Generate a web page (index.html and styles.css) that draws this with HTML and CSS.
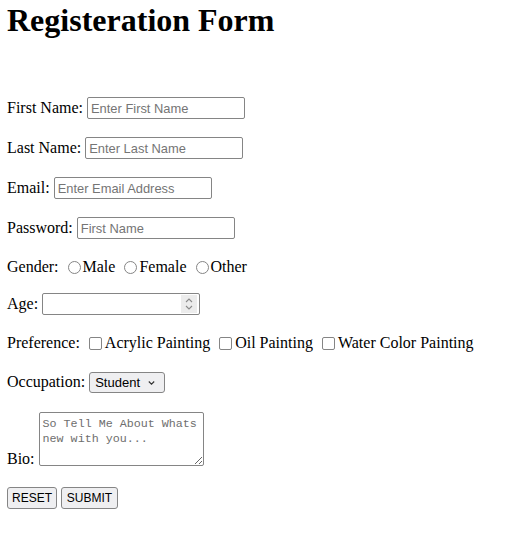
FILE: index.html
```html
<!DOCTYPE html>
<html>
<head>
<meta charset="utf-8">
<title>Registeration Form</title>
<link rel="stylesheet" href="styles.css">
</head>
<body>
<h1 class="title">Registeration Form</h1>
<form class="form">
  <div class="row r1">First Name: <input class="text" type="text" placeholder="Enter First Name"></div>
  <div class="row r1">Last Name: <input class="text" type="text" placeholder="Enter Last Name"></div>
  <div class="row r1">Email: <input class="text" type="email" placeholder="Enter Email Address"></div>
  <div class="row r-pass">Password: <input class="text" type="password" placeholder="First Name"></div>
  <div class="row r-gender">Gender: <input class="radio" type="radio" name="g">Male <input class="radio" type="radio" name="g">Female <input class="radio" type="radio" name="g">Other</div>
  <div class="row r-age">Age: <span class="num-wrap"><input class="text num" type="text"><span class="spin"><svg width="10" height="16" viewBox="0 0 10 16"><path d="M2 6 L5 3 L8 6" fill="none" stroke="#8a8a8a" stroke-width="1.1"/><path d="M2 10 L5 13 L8 10" fill="none" stroke="#8a8a8a" stroke-width="1.1"/></svg></span></span></div>
  <div class="row r-pref">Preference: <input class="check" type="checkbox">Acrylic Painting <input class="check" type="checkbox">Oil Painting <input class="check" type="checkbox">Water Color Painting</div>
  <div class="row r-occ">Occupation: <span class="sel-wrap"><select class="sel"><option>Student</option></select><svg class="chev" width="9" height="6" viewBox="0 0 9 6"><path d="M1.8 1.5 L4.5 4.2 L7.2 1.5" fill="none" stroke="#333" stroke-width="1.1"/></svg></span></div>
  <div class="bio-row"><span class="bio-label">Bio:</span><textarea class="bio" placeholder="So Tell Me About Whats new with you..."></textarea></div>
  <div class="buttons"><button class="btn b-reset" type="reset">RESET</button><button class="btn b-submit" type="submit">SUBMIT</button></div>
</form>
</body>
</html>
```
FILE: styles.css
```css
html, body {
  background: #ffffff;
}
body {
  margin: 0;
  padding: 2px 8px 0 7px;
  font-family: "Liberation Serif", "Times New Roman", serif;
  font-size: 16px;
  color: #000;
}
.title {
  margin: 0 0 58px 0;
  font-size: 32px;
  font-weight: bold;
  line-height: 37px;
}
.row {
  height: 22px;
  line-height: 22px;
  white-space: nowrap;
}
.r1 { margin-bottom: 18px; }
.r-pass { margin-bottom: 17px; }
.r-gender { margin-bottom: 15px; }
.r-age { margin-bottom: 17px; }
.r-pref { margin-bottom: 17px; }
.r-occ { margin-bottom: 19px; }
.text {
  box-sizing: border-box;
  width: 158px;
  height: 22px;
  padding: 1px 3px;
  border: 1px solid #858585;
  border-radius: 2px;
  font-family: "Liberation Sans", Arial, sans-serif;
  font-size: 12.9px;
  vertical-align: middle;
  margin: -2px 0 0 0;
  background: #fff;
}
.text::placeholder {
  color: #757575;
}
.num-wrap {
  position: relative;
  display: inline-block;
  vertical-align: middle;
  margin-top: -2px;
  height: 22px;
  line-height: 0;
}
.num-wrap .text {
  margin: 0;
  vertical-align: top;
}
.spin {
  position: absolute;
  right: 3px;
  top: 2px;
  width: 16px;
  height: 18px;
  background: #ececec;
  display: flex;
  align-items: center;
  justify-content: center;
}
.radio {
  -webkit-appearance: none;
  appearance: none;
  box-sizing: border-box;
  width: 13px;
  height: 13px;
  margin: 0 2px 0 5px;
  border: 1px solid #858585;
  border-radius: 50%;
  background: #fff;
  vertical-align: -2px;
}
.check {
  -webkit-appearance: none;
  appearance: none;
  box-sizing: border-box;
  width: 13px;
  height: 13px;
  margin: 0 3px 0 5px;
  border: 1px solid #858585;
  border-radius: 2px;
  background: #fff;
  vertical-align: -2px;
}
.sel-wrap {
  position: relative;
  display: inline-block;
  vertical-align: middle;
  margin-top: -2px;
  height: 21px;
  line-height: 0;
}
.sel {
  -webkit-appearance: none;
  appearance: none;
  box-sizing: border-box;
  width: 76px;
  height: 21px;
  margin: 0;
  padding: 0 0 0 5px;
  font-family: "Liberation Sans", Arial, sans-serif;
  font-size: 13px;
  color: #000;
  border: 1px solid #858585;
  border-radius: 3px;
  background: #efeff1;
  vertical-align: top;
}
.chev {
  position: absolute;
  right: 9px;
  top: 8px;
}
.bio-row {
  display: flex;
  align-items: flex-end;
  gap: 4px;
  margin-bottom: 21px;
}
.bio-label {
  line-height: 18px;
  margin-bottom: -2px;
}
.bio {
  box-sizing: border-box;
  width: 165px;
  height: 54px;
  margin: 0;
  padding: 4px 3px 3px 3px;
  border: 1px solid #858585;
  border-radius: 2px;
  font-family: "Liberation Mono", "Courier New", monospace;
  font-size: 11.7px;
  line-height: 15px;
  resize: both;
}
.bio::placeholder {
  color: #6e6e6e;
}
.buttons {
  display: flex;
  gap: 4px;
}
.btn {
  box-sizing: border-box;
  height: 22px;
  padding: 0;
  border: 1px solid #858585;
  border-radius: 3px;
  background: #efeff1;
  font-family: "Liberation Sans", Arial, sans-serif;
  font-size: 12px;
  color: #000;
}
.b-reset { width: 50px; }
.b-submit { width: 57px; }
```
